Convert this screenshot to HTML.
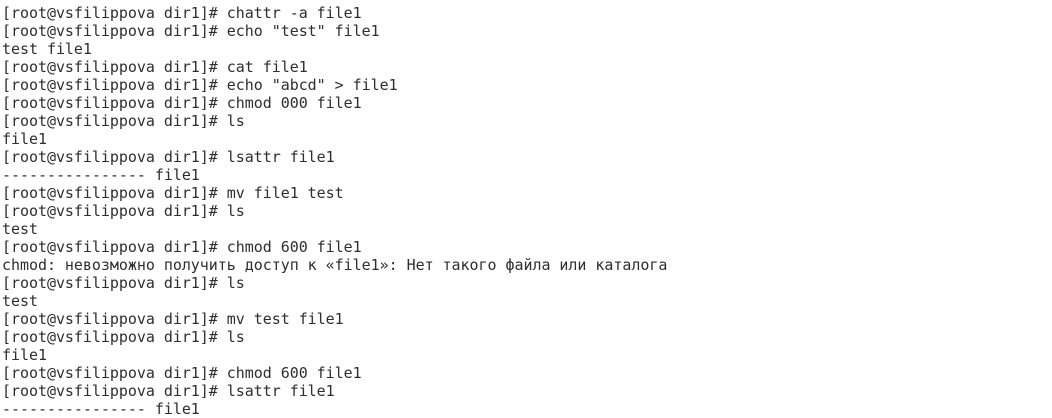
<!DOCTYPE html>
<html><head><meta charset="utf-8"><style>
html,body{margin:0;padding:0;background:#fff;width:1052px;height:417px;overflow:hidden}
pre{margin:0;position:absolute;left:2px;top:4px;font-family:"DejaVu Sans Mono","Liberation Mono",monospace;font-size:15px;line-height:18px;letter-spacing:-0.04px;color:#2e2e2e}
</style></head><body>
<pre>[root@vsfilippova dir1]# chattr -a file1
[root@vsfilippova dir1]# echo "test" file1
test file1
[root@vsfilippova dir1]# cat file1
[root@vsfilippova dir1]# echo "abcd" &gt; file1
[root@vsfilippova dir1]# chmod 000 file1
[root@vsfilippova dir1]# ls
file1
[root@vsfilippova dir1]# lsattr file1
---------------- file1
[root@vsfilippova dir1]# mv file1 test
[root@vsfilippova dir1]# ls
test
[root@vsfilippova dir1]# chmod 600 file1
chmod: невозможно получить доступ к «file1»: Нет такого файла или каталога
[root@vsfilippova dir1]# ls
test
[root@vsfilippova dir1]# mv test file1
[root@vsfilippova dir1]# ls
file1
[root@vsfilippova dir1]# chmod 600 file1
[root@vsfilippova dir1]# lsattr file1
---------------- file1</pre>
</body></html>
